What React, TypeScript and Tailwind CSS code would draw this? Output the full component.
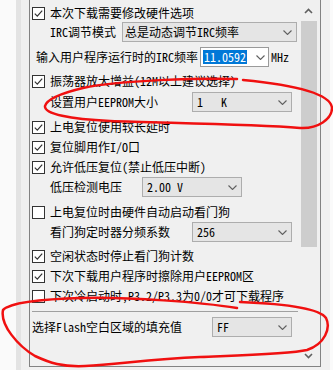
import React from 'react';

const font = 'font-["Noto_Sans_Mono_CJK_SC","Noto_Sans_CJK_SC",monospace]';

function Chevron() {
  return (
    <svg width="9" height="5" viewBox="0 0 9 5" className="shrink-0">
      <polyline points="0.5,0.5 4.5,4.5 8.5,0.5" fill="none" stroke="#606060" strokeWidth="1.1" />
    </svg>
  );
}

function Check({ on, label }: { on: boolean; label: string }) {
  return (
    <div className="flex items-center h-[20px] pl-[2px]">
      <div className="w-[13px] h-[13px] border border-[#333] bg-white flex items-center justify-center shrink-0">
        {on && (
          <svg width="11" height="11" viewBox="0 0 11 11">
            <polyline points="1.8,5.6 4.3,8.2 9.2,2.6" fill="none" stroke="#333" strokeWidth="1.2" />
          </svg>
        )}
      </div>
      <span className="ml-[5px] whitespace-pre">{label}</span>
    </div>
  );
}

function Combo({ w, value, pl = 'pl-[4px]' }: { w: string; value: string; pl?: string }) {
  return (
    <div className={`${w} h-[20px] shrink-0 bg-[#e5e5e5] border border-[#adadad] flex items-center ${pl} pr-[4px]`}>
      <span className="whitespace-pre">{value}</span>
      <div className="ml-auto"><Chevron /></div>
    </div>
  );
}

export default function App() {
  return (
    <div className={`relative w-[333px] h-[370px] bg-[#f0f0f0] flex overflow-hidden text-[12px] leading-none text-black ${font}`}>
      <div className="w-[16px] bg-[#fafafa]" />
      <div className="w-[5px] bg-[#e3e3e3]" />
      <div className="w-[8px]" />

      {/* panel with options */}
      <div className="w-[292px] h-[367px] border-l border-r border-b border-[#828282] flex shrink-0">
        <div className="w-[270px] flex flex-col pt-[3px]">
          <Check on label="本次下载需要修改硬件选项" />
          <div className="flex items-center h-[20px] pl-[20px] -mt-px">
            <span className="w-[72px]">IRC调节模式</span>
            <Combo w="w-[175px]" value="总是动态调节IRC频率" pl="pl-[2px]" />
          </div>
          <div className="flex items-center h-[20px] pl-[6px] mt-[5px]">
            <span className="w-[164px]">输入用户程序运行时的IRC频率</span>
            <div className="w-[69px] h-[20px] bg-white border border-[#9a9a9a] flex items-center pl-[2px] pr-[3px]">
              <span className="bg-[#0078d7] text-white h-[14px] px-px flex items-center">11.0592</span>
              <div className="ml-auto"><Chevron /></div>
            </div>
            <span className="ml-[2px]">MHz</span>
          </div>
          <div className="mt-[4px]">
            <Check on label="振荡器放大增益(12M以上建议选择)" />
          </div>
          <div className="flex items-center h-[20px] pl-[20px] mt-px">
            <span className="w-[142px]">设置用户EEPROM大小</span>
            <Combo w="w-[100px]" value="1   K" />
          </div>
          <div className="mt-[5px]">
            <Check on label="上电复位使用较长延时" />
          </div>
          <Check on label="复位脚用作I/O口" />
          <Check on label="允许低压复位(禁止低压中断)" />
          <div className="flex items-center h-[20px] pl-[20px]">
            <span className="w-[92px]">低压检测电压</span>
            <Combo w="w-[100px]" value="2.00 V" />
          </div>
          <div className="mt-[5px]">
            <Check on={false} label="上电复位时由硬件自动启动看门狗" />
          </div>
          <div className="flex items-center h-[20px] pl-[20px]">
            <span className="w-[142px]">看门狗定时器分频系数</span>
            <Combo w="w-[100px]" value="256" />
          </div>
          <div className="mt-[4px]">
            <Check on label="空闲状态时停止看门狗计数" />
          </div>
          <Check on label="下次下载用户程序时擦除用户EEPROM区" />
          <Check on={false} label="下次冷启动时,P3.2/P3.3为0/0才可下载程序" />
          <div className="mt-[5px] ml-[2px] w-[266px] h-px bg-[#a0a0a0]" />
          <div className="flex items-center h-[20px] pl-[2px] mt-[5px]">
            <span className="w-[180px]">选择Flash空白区域的填充值</span>
            <Combo w="w-[80px]" value="FF" />
          </div>
        </div>

        {/* scrollbar */}
        <div className="w-[20px] flex flex-col">
          <div className="h-[21px] flex items-center justify-center pr-[3px]">
            <svg width="9" height="6" viewBox="0 0 9 6">
              <polyline points="1,5 4.5,1.5 8,5" fill="none" stroke="#606060" strokeWidth="1.6" />
            </svg>
          </div>
          <div className="ml-px w-[16px] h-[226px] bg-[#cdcdcd]" />
          <div className="flex-1" />
          <div className="h-[21px] flex items-center justify-center pr-[3px]">
            <svg width="9" height="6" viewBox="0 0 9 6">
              <polyline points="1,1 4.5,4.5 8,1" fill="none" stroke="#606060" strokeWidth="1.6" />
            </svg>
          </div>
        </div>
      </div>

      <div className="w-[9px]" />
      <div className="flex-1 bg-[#fafafa]" />

      {/* red hand-drawn marks */}
      <svg className="absolute inset-0 pointer-events-none" width="333" height="370" viewBox="0 0 333 370">
        <path
          d="M237,79 C200,78 120,80 83,88 C62,93 47,99 45,106 C44,114 70,119 110,121 C160,123 250,124 300,128 C318,129 332,119 332,108 C331,96 305,86 243,80"
          fill="none"
          stroke="#f01010"
          strokeWidth="2.5"
          strokeLinecap="round"
        />
        <path
          d="M237,308 C200,302 130,297 83,298 C40,299 10,303 3,310 C0,325 18,346 35,356 C50,363 62,367 85,366 C120,364 150,359 200,357 C250,355 290,354 307,350 C325,344 331,328 326,318 C320,309 290,304 240,302"
          fill="none"
          stroke="#f01010"
          strokeWidth="2.5"
          strokeLinecap="round"
        />
      </svg>
    </div>
  );
}
